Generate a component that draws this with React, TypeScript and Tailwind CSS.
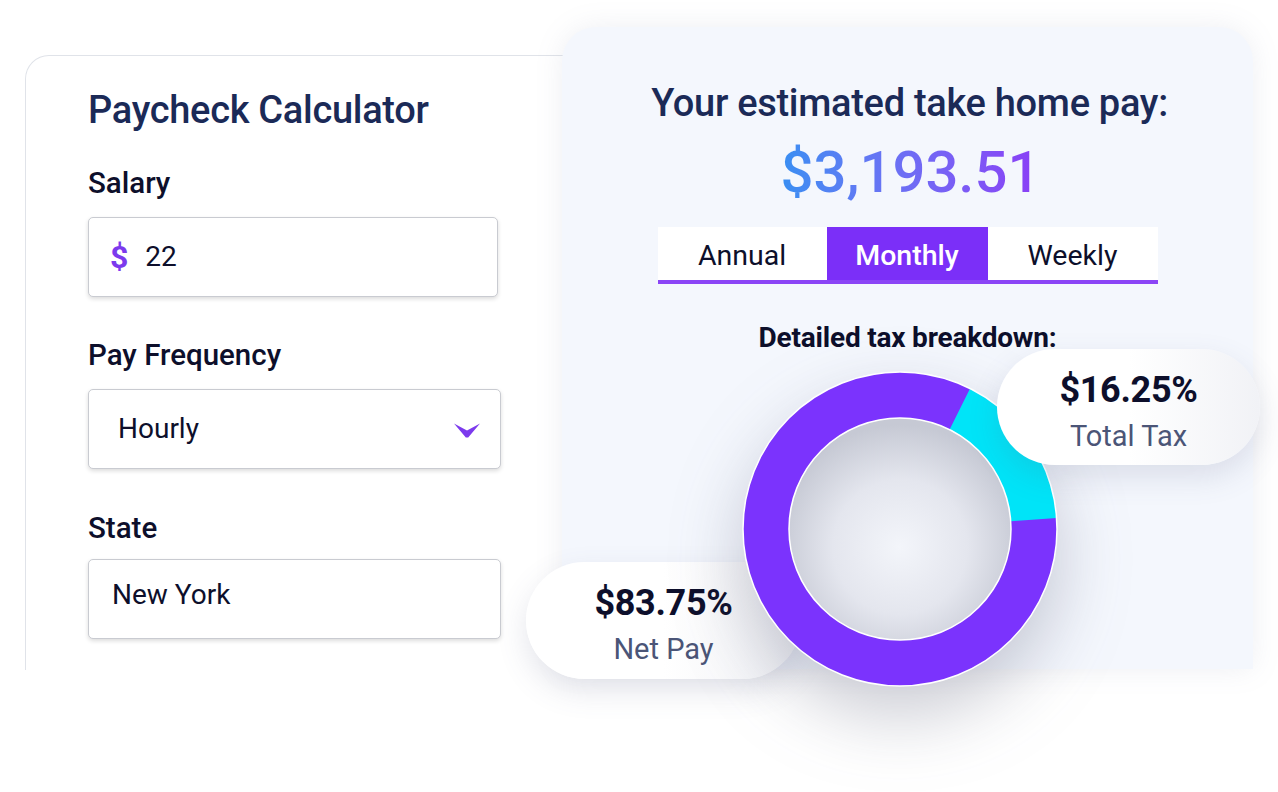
import React from 'react';

// ring geometry for the tax breakdown donut
const C = 162;
const R_OUT = 157;
const R_IN = 111;

function polar(r: number, deg: number) {
  const a = ((deg - 90) * Math.PI) / 180;
  return [C + r * Math.cos(a), C + r * Math.sin(a)];
}

function sector(from: number, to: number) {
  const [x1, y1] = polar(R_OUT, from);
  const [x2, y2] = polar(R_OUT, to);
  const [x3, y3] = polar(R_IN, to);
  const [x4, y4] = polar(R_IN, from);
  const large = to - from > 180 ? 1 : 0;
  return `M${x1} ${y1} A${R_OUT} ${R_OUT} 0 ${large} 1 ${x2} ${y2} L${x3} ${y3} A${R_IN} ${R_IN} 0 ${large} 0 ${x4} ${y4} Z`;
}

function Donut() {
  return (
    <svg
      width="324"
      height="324"
      viewBox="0 0 324 324"
      className="drop-shadow-[0_30px_35px_rgba(70,72,100,0.28)]"
    >
      <defs>
        <radialGradient id="hole" cx="50%" cy="58%" r="55%">
          <stop offset="0%" stopColor="#f3f5fa" />
          <stop offset="55%" stopColor="#e4e6ee" />
          <stop offset="100%" stopColor="#c6c9d4" />
        </radialGradient>
      </defs>
      <circle cx={C} cy={C} r={(R_OUT + R_IN) / 2} fill="none" stroke="#7b33fd" strokeWidth={R_OUT - R_IN} />
      <path d={sector(26.5, 86)} fill="#00e4f8" />
      <circle cx={C} cy={C} r={R_IN} fill="url(#hole)" />
      <circle cx={C} cy={C} r={R_OUT} fill="none" stroke="#ffffff" strokeWidth="1.5" />
      <circle cx={C} cy={C} r={R_IN} fill="none" stroke="#ffffff" strokeWidth="1.5" />
    </svg>
  );
}

function Chevron() {
  return (
    <svg width="26" height="15" viewBox="0 0 26 15">
      <path d="M0 0.5 L13 7.5 L26 0.5 L14.2 14.5 L11.8 14.5 Z" fill="#7c3aed" />
    </svg>
  );
}

function Field({ children }: { children: React.ReactNode }) {
  return (
    <div className="flex h-[80px] items-center rounded-[5px] border border-[#c9cbd1] bg-white shadow-[0_2px_4px_rgba(0,0,0,0.14)]">
      {children}
    </div>
  );
}

function LeftCard() {
  return (
    <div className="ml-[25px] mt-[28px] h-[615px] w-[545px] shrink-0 rounded-tl-[24px] border-l border-t border-[#e0e3e9] bg-white pl-[62px] pt-[35px]">
      <h1 className="text-[38px] font-medium leading-none tracking-[-0.3px] text-[#1b2a57]">Paycheck Calculator</h1>

      <div className="mt-[40px] text-[29.5px] font-medium leading-none text-[#0d0f2b]">Salary</div>
      <div className="mt-[18px] w-[410px]">
        <Field>
          <span className="ml-[21px] text-[32px] font-bold leading-none text-[#7c3aed]">$</span>
          <span className="ml-[17px] text-[28px] leading-none text-[#0d0f2b]">22</span>
        </Field>
      </div>

      <div className="mt-[44px] text-[29.5px] font-medium leading-none text-[#0d0f2b]">Pay Frequency</div>
      <div className="mt-[19px] w-[413px]">
        <Field>
          <span className="ml-[29px] flex-1 text-[28px] leading-none text-[#0d0f2b]">Hourly</span>
          <span className="mr-[20px] mt-[2px]">
            <Chevron />
          </span>
        </Field>
      </div>

      <div className="mt-[45px] text-[29.5px] font-medium leading-none text-[#0d0f2b]">State</div>
      <div className="mt-[15px] w-[413px]">
        <Field>
          <span className="mb-[7px] ml-[23px] text-[28px] leading-none text-[#0d0f2b]">New York</span>
        </Field>
      </div>
    </div>
  );
}

function Tabs() {
  const tabs = [
    { label: 'Annual', w: 'w-[169px]', active: false },
    { label: 'Monthly', w: 'w-[161px]', active: true },
    { label: 'Weekly', w: 'w-[170px]', active: false },
  ];
  return (
    <div className="mt-[26px] flex w-[500px] border-b-[4px] border-[#8b45f6] bg-white">
      {tabs.map((t) => (
        <div
          key={t.label}
          className={
            t.active
              ? `${t.w} flex h-[53px] items-center justify-center bg-[#7b2ff8] pt-[5px] text-[28.5px] font-medium leading-none text-white`
              : `${t.w} flex h-[53px] items-center justify-center pt-[5px] text-[28.5px] leading-none text-[#0d0f2b]`
          }
        >
          {t.label}
        </div>
      ))}
    </div>
  );
}

function Pill({ value, label }: { value: string; label: string }) {
  return (
    <div className="flex h-full w-full flex-col items-center justify-center rounded-full bg-linear-to-r from-white via-white to-[#f1f2f6] pt-[8px] shadow-[0_12px_30px_rgba(90,96,130,0.16)]">
      <span className="text-[36px] font-bold leading-none tracking-[-0.3px] text-[#0d0f2b]">{value}</span>
      <span className="mt-[14px] text-[29px] leading-none text-[#4b5577]">{label}</span>
    </div>
  );
}

function ResultPanel() {
  return (
    <div className="relative -ml-[8px] flex h-[642px] w-[691px] shrink-0 flex-col items-center rounded-t-[34px] bg-[#f4f7fd] pt-[57px] shadow-[0_0_28px_rgba(120,130,160,0.13)]">
      <h2 className="pl-[4px] text-[38px] font-medium leading-none tracking-[-0.3px] text-[#1b2a57]">
        Your estimated take home pay:
      </h2>
      <div className="mt-[21px] bg-linear-to-r from-[#3390f2] to-[#8a3cf6] bg-clip-text pl-[6px] text-[58px] font-medium leading-none text-transparent">
        $3,193.51
      </div>
      <Tabs />
      <div className="mt-[40px] text-[28px] font-bold leading-none tracking-[-0.2px] text-[#0d0f2b]">
        Detailed tax breakdown:
      </div>

      {/* Net pay bubble sits under the ring */}
      <div className="absolute left-[-36px] top-[535px] z-0 h-[117px] w-[275px]">
        <Pill value="$83.75%" label="Net Pay" />
      </div>

      <div className="relative z-10 mt-[15px] self-start pl-[176px]">
        <Donut />
      </div>

      {/* Total tax bubble sits over the ring */}
      <div className="absolute left-[435px] top-[322px] z-20 h-[116px] w-[263px]">
        <Pill value="$16.25%" label="Total Tax" />
      </div>
    </div>
  );
}

export default function App() {
  return (
    <div className="h-[792px] w-[1278px] overflow-hidden bg-white font-['Roboto',sans-serif]">
      <div className="flex pt-[27px]">
        <LeftCard />
        <ResultPanel />
      </div>
    </div>
  );
}
